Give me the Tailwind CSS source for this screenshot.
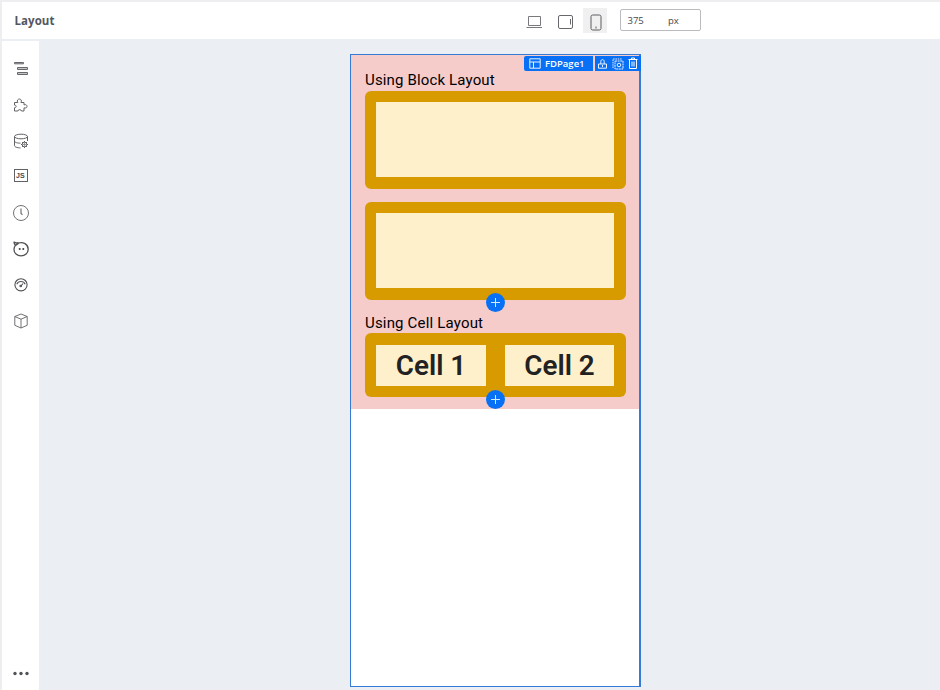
<!DOCTYPE html>
<html lang="en">
<head>
<meta charset="utf-8">
<title>Layout</title>
<script src="https://cdn.jsdelivr.net/npm/@tailwindcss/browser@4"></script>
</head>
<body class="h-[690px] w-[940px] overflow-hidden bg-[#ebeef3] font-['Open_Sans',sans-serif] text-[#45484f]">
<div class="flex h-full flex-col border-l-2 border-t-2 border-[#eeeef0]">
  <header class="flex h-[37px] shrink-0 bg-white">
    <h1 class="w-[513px] pl-[12.5px] pt-[10px] text-[11.5px] leading-[18px] font-bold text-[#54565f] tracking-[0.05px]">Layout</h1>
    <div class="flex pt-[6px]">
      <button class="flex h-[26px] w-[38px] items-center justify-center" aria-label="Desktop">
        <svg class="mt-[2px]" width="16" height="14" viewBox="0 0 16 14" fill="none" stroke="#77797d"><path d="M2.500 1.500h12v9h-12zM.5 12.500h15.500"/></svg>
      </button>
      <button class="flex h-[26px] w-[25px] items-center justify-center" aria-label="Tablet">
        <svg class="mt-[2px]" width="17" height="16" viewBox="0 0 17 16" fill="none" stroke="#66686c"><rect x="1.500" y="1.500" width="14" height="13" rx="1.500"/><path d="M13.500 5v5.500"/></svg>
      </button>
      <button class="ml-[5px] flex h-[25px] w-[24px] items-center justify-center bg-[#f0f0f0]" aria-label="Phone">
        <svg class="ml-[2px] mt-[3px]" width="12" height="17" viewBox="0 0 12 17" fill="none" stroke="#5b5d62"><rect x="1" y="1" width="10" height="15" rx="1.700"/><path d="M6 12.500v2"/></svg>
      </button>
      <div class="ml-[13px] mt-px flex h-[22px] w-[81px] rounded-[2px] border border-[#b9bbbf] pl-[6.500px] text-[9.500px] leading-[21px]">
        <span class="w-[40.500px]">375</span><span>px</span>
      </div>
    </div>
  </header>
  <div class="flex min-h-0 flex-1 pt-[2px]">
    <nav class="flex w-[37px] shrink-0 flex-col items-center bg-white pt-[19px]">
      <div class="flex h-[270px] flex-col justify-between">
        <svg width="18" height="18" viewBox="0 0 18 18" fill="#c4c5c7" stroke="#66686c"><path d="M2.500 2.500h9v1.300h-9zM5.500 7.500h10v2H5.500zM5.500 12.500h10v2H5.500z"/></svg>
        <svg width="18" height="18" viewBox="0 0 18 18" fill="none" stroke="#606266" stroke-linejoin="round"><path d="M2.500 6.500h3.300c-1.300-2 .1-3.500 1.600-3.500s2.700 1.600 1.500 3.500H12v2.400c2-.8 3 .3 3 1.500s-1.200 2.200-3 1.400v3.200H9.500c0-1.800-3.600-1.800-3.600 0H2.500v-3.200c2.200 0 2.200-2.700 0-2.700z"/></svg>
        <svg width="18" height="18" viewBox="0 0 18 18" fill="none" stroke="#606266"><ellipse cx="9" cy="4.500" rx="6.500" ry="2.300"/><path d="M2.500 4.500v9c0 1.400 2.700 2.400 6 2.400M15.500 4.500V9M2.500 9c0 1.400 3 2.200 6 2.200"/><circle cx="12.500" cy="12.500" r="2.300"/><circle cx="12.500" cy="12.500" r=".7"/><path d="M12.500 9v1.200M12.500 14.800v1.200M9 12.500h1.200M14.800 12.500h1.200M10 10l.9.900M14.100 14.100l.9.900M10 15l.9-.9M14.100 10.900l.9-.9"/></svg>
        <div class="flex h-[18px] w-[18px] items-center justify-center"><span class="mb-[3px] flex h-[13px] w-[14px] items-center justify-center border border-[#606266] font-['Liberation_Sans',sans-serif] text-[7px] leading-none font-bold tracking-[0.3px]">JS</span></div>
        <svg width="18" height="18" viewBox="0 0 18 18" fill="none" stroke="#707276"><circle cx="9" cy="9" r="7.500"/><path d="M9 4.500v5l1.500 1.200" stroke-width="1.200"/></svg>
        <svg width="18" height="18" viewBox="0 0 18 18" fill="none" stroke="#505256" stroke-width="1.300" stroke-linejoin="round"><path d="M6.500 3C11 1.500 16.200 4.200 16.200 9.200c0 4-3.200 6.600-7.200 6.600S2 13.200 2 9.400c0-1.600.5-2.900 1.400-4C2.600 4.600 2.100 3.500 2 2.100c1.500.7 3 .9 4.500.9z"/><path d="M3.400 5.400L6.500 3M7.700 8v2M11.300 8v2" stroke-width="1.700"/></svg>
        <svg width="18" height="18" viewBox="0 0 18 18" fill="none" stroke="#505256" stroke-width="1.100"><circle cx="9" cy="8.800" r="6.100"/><path d="M4.800 8.200c1.400-3.700 6.900-3.700 8.400 0M9 10l2-2.500"/><circle cx="8.700" cy="10" r=".8"/></svg>
        <svg width="18" height="18" viewBox="0 0 18 18" fill="none" stroke="#606266" stroke-width=".9" stroke-linejoin="round"><path d="M9 2l6.200 2.500v8.800L9 16l-6.200-2.700V4.500zM2.800 4.500L9 7.200l6.200-2.700M9 7.200V16"/></svg>
      </div>
      <svg class="mb-[14px] mt-auto" width="18" height="5" viewBox="0 0 18 5" fill="#505257"><circle cx="3" cy="2.500" r="1.700"/><circle cx="9" cy="2.500" r="1.700"/><circle cx="15" cy="2.500" r="1.700"/></svg>
    </nav>
    <main class="flex flex-1 pl-[311px] pt-[13px]">
      <section class="relative h-[633px] w-[291px] bg-white font-[Roboto,sans-serif]">
        <div class="mx-px flex h-[355px] flex-col bg-[#f6cccb] px-[14px] pt-[17px] text-black">
          <p class="h-[20px] text-[15px] leading-[19px] tracking-[0.150px]">Using Block Layout</p>
          <div class="flex h-[98px] w-[261px] rounded-[6px] border-[11px] border-b-[12px] border-r-[12px] border-[#d79b00] bg-[#fff0cc]"></div>
          <div class="relative mt-[13px] flex h-[98px] w-[261px] rounded-[6px] border-[11px] border-b-[12px] border-r-[12px] border-[#d79b00] bg-[#fff0cc]">
            <button class="absolute -bottom-[23.500px] left-[110px] flex size-[19px] items-center justify-center rounded-full bg-[#0870f5]" aria-label="Add"><svg width="11" height="11" viewBox="0 0 11 11" stroke="#d5e9ff"><path d="M5.500 1v9M1 5.500h9"/></svg></button>
          </div>
          <p class="mt-[13px] h-[20px] text-[15px] leading-[20px] tracking-[0.180px]">Using Cell Layout</p>
          <div class="relative flex h-[64px] w-[261px] justify-between rounded-[6px] bg-[#d79b00] pb-[11px] pl-[11px] pr-[12px] pt-[12px] text-[27.800px] leading-[41px] font-semibold text-[#222]">
            <div class="w-[110px] bg-[#fff0cc] text-center">Cell 1</div>
            <div class="w-[109px] bg-[#fff0cc] text-center">Cell 2</div>
            <button class="absolute -bottom-[12px] left-[121px] flex size-[19px] items-center justify-center rounded-full bg-[#0870f5]" aria-label="Add"><svg width="11" height="11" viewBox="0 0 11 11" stroke="#d5e9ff"><path d="M5.500 1v9M1 5.500h9"/></svg></button>
          </div>
        </div>
        <div class="pointer-events-none absolute inset-0 border border-r-[2px] border-[#347bd8]"></div>
        <div class="absolute right-0 top-[2px] flex h-[15px] gap-[2px] font-['Open_Sans',sans-serif] text-white">
          <div class="flex w-[69px] items-center rounded-l-[2px] bg-[#0870f5] pl-[5px] text-[9.500px] leading-[15px] font-semibold">
            <svg class="mr-[4px]" width="12" height="11" viewBox="0 0 12 11" fill="none" stroke="currentColor" stroke-width=".9"><path d="M.8.800h10.400v9.400H.8zM.8 4h10.400M4.500 4v6.200"/></svg>FDPage1
          </div>
          <div class="flex w-[46px] items-center gap-[4px] bg-[#0870f5] pl-[2px]">
            <svg width="11" height="12" viewBox="0 0 11 12" fill="none" stroke="currentColor" stroke-width=".9"><path d="M1.500 6h8v4.200h-8zM3.800 6V3.300c0-2.200 3.400-2.200 3.400 0V6M5.500 7v2"/></svg>
            <svg width="12" height="12" viewBox="0 0 12 12" fill="none" stroke="currentColor" stroke-width=".9"><path d="M1 10V1h9" stroke-dasharray="1.500 .8"/><path d="M3 3h8v8H3z" stroke-dasharray="2 .6"/><circle cx="7" cy="7" r="1.800"/></svg>
            <svg width="10" height="13" viewBox="0 0 10 13" fill="none" stroke="currentColor"><path d="M.5 2.500h9M3.500 2.500V1h3v1.500M1.500 2.500v9h7v-9M4 4.500v5M6 4.500v5"/></svg>
          </div>
        </div>
      </section>
    </main>
  </div>
</div>
</body>
</html>
